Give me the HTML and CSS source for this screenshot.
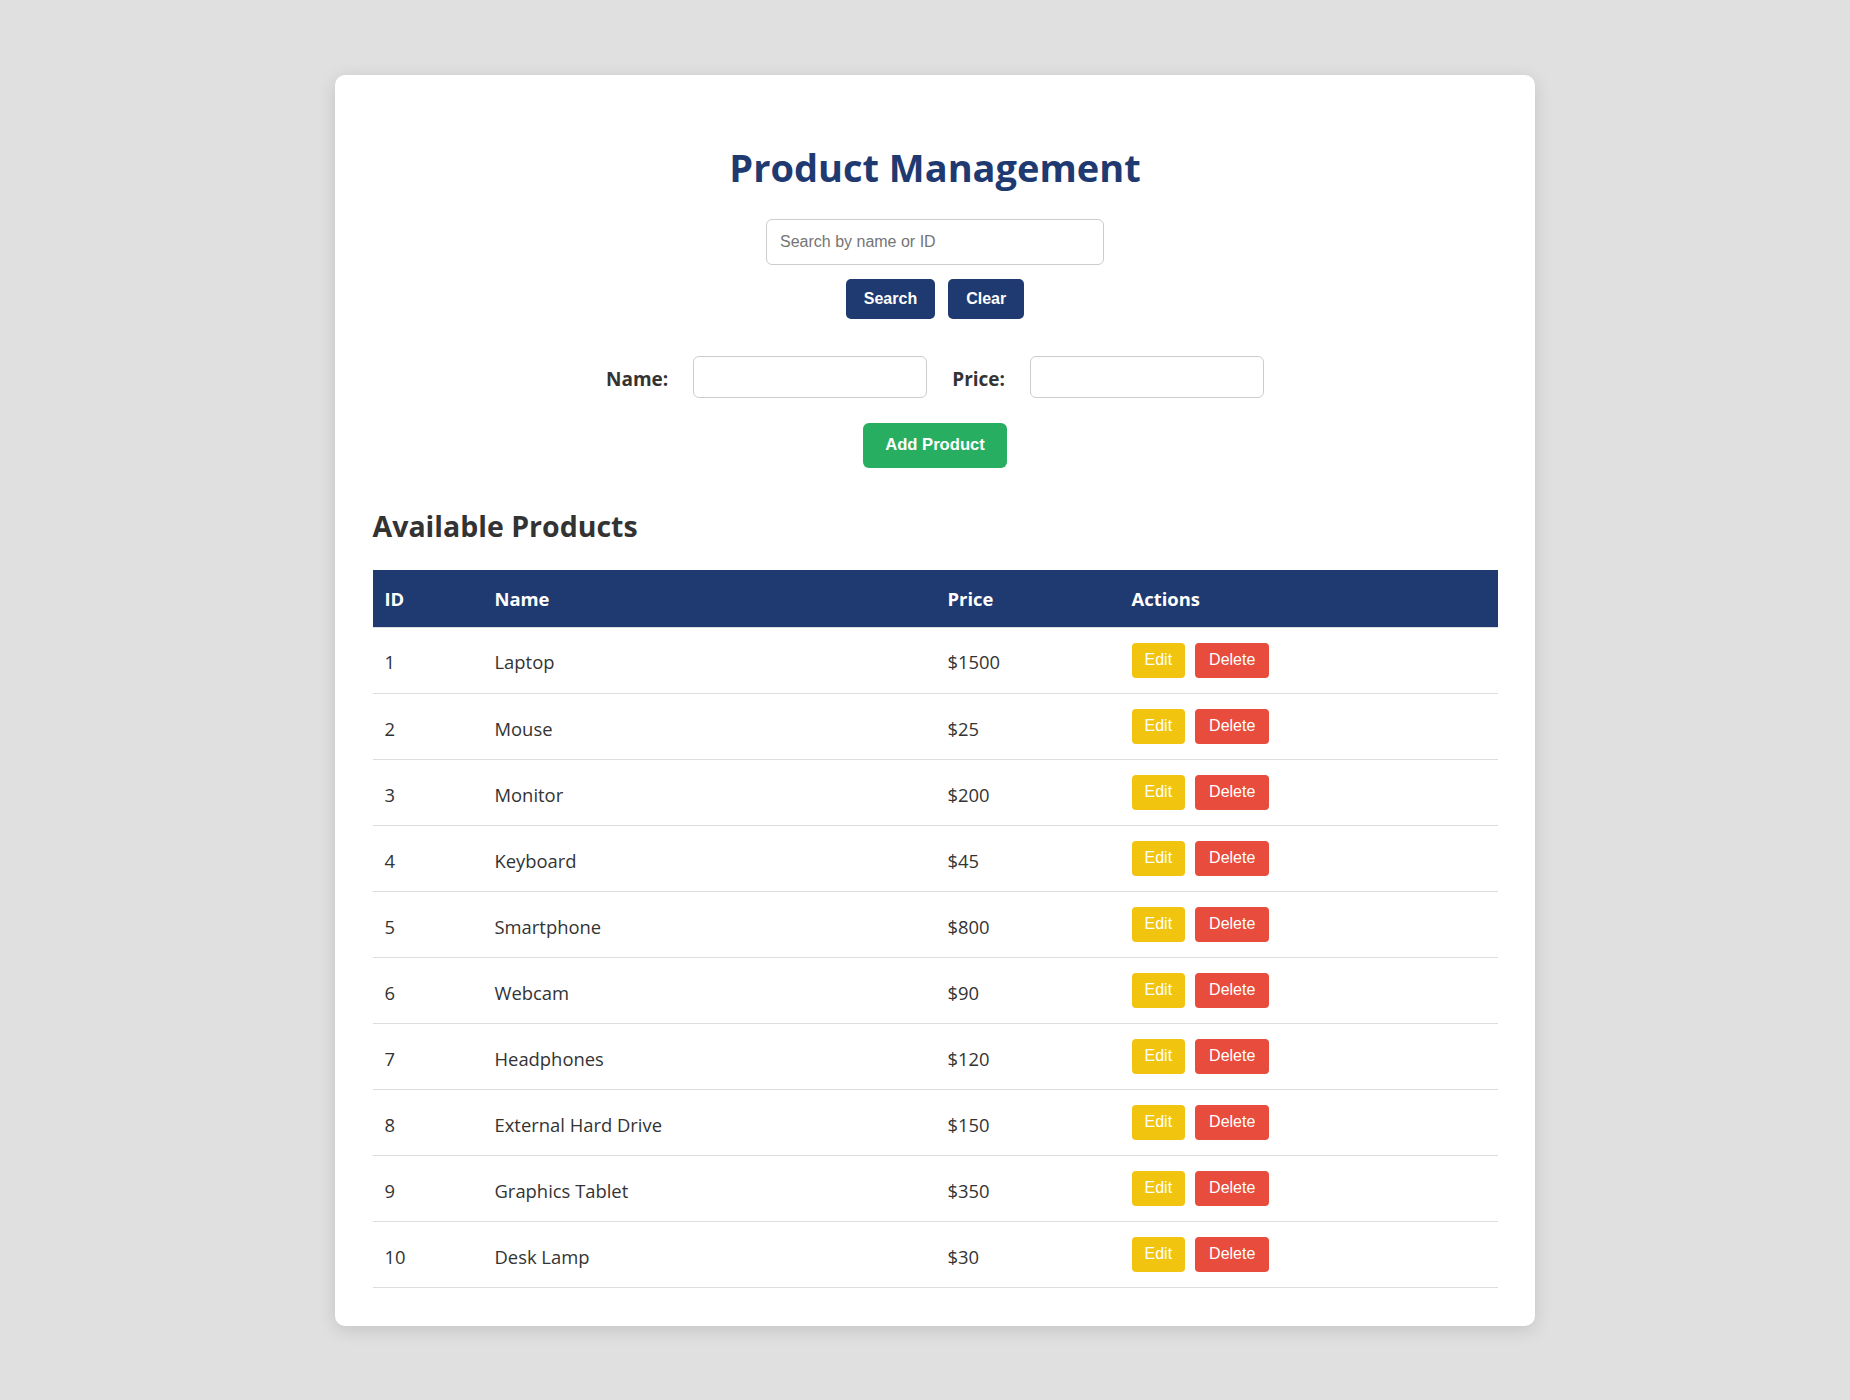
FILE: index.html
```html
<!DOCTYPE html>
<html lang="en">
<head>
<meta charset="utf-8">
<title>Product Management</title>
<link rel="stylesheet" href="styles.css">
</head>
<body>
<main class="card">
  <h1 class="title">Product Management</h1>

  <div class="search">
    <input class="search-input" type="text" placeholder="Search by name or ID">
    <div class="search-buttons">
      <button class="btn btn-navy">Search</button>
      <button class="btn btn-navy">Clear</button>
    </div>
  </div>

  <form class="add-form">
    <div class="fields">
      <label class="label" for="name">Name:</label>
      <input class="field" id="name" type="text">
      <label class="label label-price" for="price">Price:</label>
      <input class="field" id="price" type="text">
    </div>
    <button type="button" class="btn btn-green">Add Product</button>
  </form>

  <h2 class="section-title">Available Products</h2>

  <table class="products">
    <thead>
      <tr>
        <th class="c-id">ID</th>
        <th class="c-name">Name</th>
        <th class="c-price">Price</th>
        <th class="c-actions">Actions</th>
      </tr>
    </thead>
    <tbody>
      <tr><td>1</td><td>Laptop</td><td>$1500</td><td class="actions"><button class="btn-sm btn-edit">Edit</button><button class="btn-sm btn-delete">Delete</button></td></tr>
      <tr><td>2</td><td>Mouse</td><td>$25</td><td class="actions"><button class="btn-sm btn-edit">Edit</button><button class="btn-sm btn-delete">Delete</button></td></tr>
      <tr><td>3</td><td>Monitor</td><td>$200</td><td class="actions"><button class="btn-sm btn-edit">Edit</button><button class="btn-sm btn-delete">Delete</button></td></tr>
      <tr><td>4</td><td>Keyboard</td><td>$45</td><td class="actions"><button class="btn-sm btn-edit">Edit</button><button class="btn-sm btn-delete">Delete</button></td></tr>
      <tr><td>5</td><td>Smartphone</td><td>$800</td><td class="actions"><button class="btn-sm btn-edit">Edit</button><button class="btn-sm btn-delete">Delete</button></td></tr>
      <tr><td>6</td><td>Webcam</td><td>$90</td><td class="actions"><button class="btn-sm btn-edit">Edit</button><button class="btn-sm btn-delete">Delete</button></td></tr>
      <tr><td>7</td><td>Headphones</td><td>$120</td><td class="actions"><button class="btn-sm btn-edit">Edit</button><button class="btn-sm btn-delete">Delete</button></td></tr>
      <tr><td>8</td><td>External Hard Drive</td><td>$150</td><td class="actions"><button class="btn-sm btn-edit">Edit</button><button class="btn-sm btn-delete">Delete</button></td></tr>
      <tr><td>9</td><td>Graphics Tablet</td><td>$350</td><td class="actions"><button class="btn-sm btn-edit">Edit</button><button class="btn-sm btn-delete">Delete</button></td></tr>
      <tr><td>10</td><td>Desk Lamp</td><td>$30</td><td class="actions"><button class="btn-sm btn-edit">Edit</button><button class="btn-sm btn-delete">Delete</button></td></tr>
    </tbody>
  </table>
</main>
</body>
</html>
```

FILE: styles.css
```css
html, body {
  margin: 0;
}

body {
  background: #e0e0e0;
  font-family: "Open Sans", "Noto Sans", sans-serif;
  color: #333;
  display: flex;
  justify-content: center;
  align-items: flex-start;
  padding: 75px 0 20px 20px;
  box-sizing: border-box;
  min-height: 100vh;
}

.card {
  width: 1200px;
  box-sizing: border-box;
  background: #fff;
  border-radius: 10px;
  box-shadow: 0 4px 18px rgba(0, 0, 0, 0.13);
  padding: 37.5px;
}

.title {
  margin: 28px 0 26px;
  text-align: center;
  color: #1f3a70;
  font-size: 38px;
  font-weight: 700;
  line-height: 52px;
}

.search {
  display: flex;
  flex-direction: column;
  align-items: center;
  gap: 14px;
}

.search-input {
  width: 338px;
  height: 46px;
  box-sizing: border-box;
  border: 1px solid #ccc;
  border-radius: 6px;
  padding: 0 13px;
  font-family: "Liberation Sans", Arial, sans-serif;
  font-size: 16px;
  color: #333;
  outline: none;
}

.search-input::placeholder {
  color: #757575;
}

.search-buttons {
  display: flex;
  gap: 13px;
}

.btn {
  border: none;
  color: #fff;
  font-family: "Liberation Sans", Arial, sans-serif;
  font-weight: 700;
  cursor: pointer;
}

.btn-navy {
  background: #1f3a70;
  height: 40px;
  padding: 0 18px;
  font-size: 16px;
  border-radius: 5px;
}

.add-form {
  margin-top: 37px;
  display: flex;
  flex-direction: column;
  align-items: center;
  gap: 25px;
}

.fields {
  display: flex;
  align-items: center;
  gap: 25px;
}

.label {
  font-weight: 700;
  font-size: 19px;
  color: #333;
  padding-top: 4px;
}

.field {
  width: 234px;
  height: 42px;
  box-sizing: border-box;
  border: 1px solid #ccc;
  border-radius: 6px;
  padding: 0 10px;
  font-family: "Liberation Sans", Arial, sans-serif;
  font-size: 16px;
  outline: none;
}

.btn-green {
  background: #27ae60;
  height: 45px;
  padding: 0 22px;
  font-size: 16.6px;
  border-radius: 6px;
}

.section-title {
  margin: 39px 0 24px;
  font-size: 28.5px;
  font-weight: 700;
  line-height: 39px;
  color: #333;
}

.products {
  width: 100%;
  table-layout: fixed;
  border-collapse: collapse;
  font-size: 18.4px;
}

.products th {
  background: #1f3a70;
  color: #fff;
  font-weight: 700;
  text-align: left;
  padding: 16px 12px;
  line-height: 25px;
  border-bottom: 1px solid #ddd;
}

.c-id { width: 86px; }
.c-name { width: 429px; }
.c-price { width: 160px; }
.c-actions { width: 354px; }

.products td {
  padding: 17px 12px 14px;
  line-height: 25px;
  border-bottom: 1px solid #ddd;
  color: #333;
  text-align: left;
}

.products td.actions {
  display: flex;
  align-items: center;
  gap: 10px;
  padding: 15px 12px;
}

.btn-sm {
  border: none;
  height: 35px;
  padding: 0 13px;
  border-radius: 4px;
  color: #fff;
  font-family: "Liberation Sans", Arial, sans-serif;
  font-size: 16px;
  cursor: pointer;
}

.btn-edit {
  background: #f1c40f;
}

.btn-delete {
  background: #e74c3c;
  padding: 0 14px;
}
```
